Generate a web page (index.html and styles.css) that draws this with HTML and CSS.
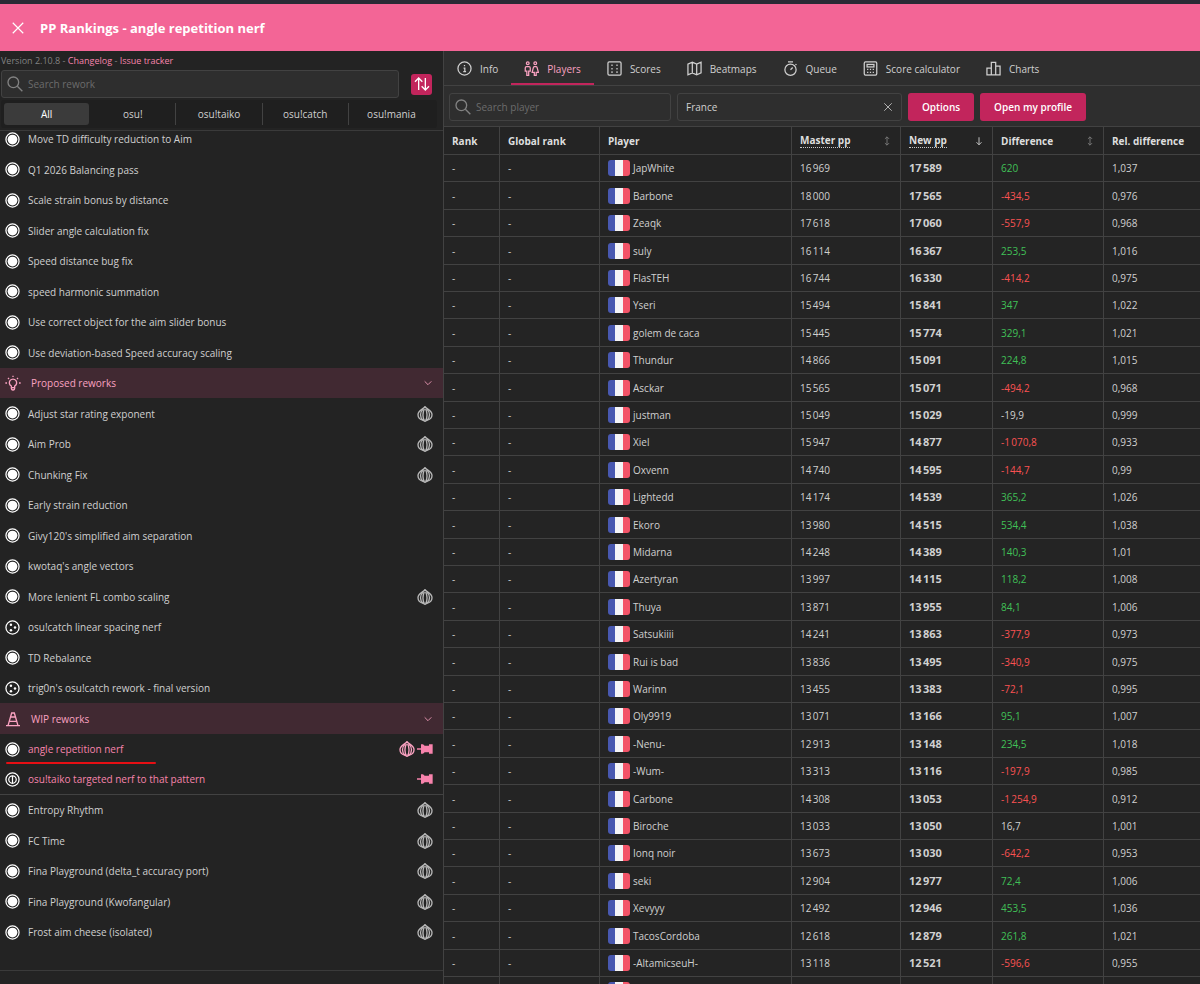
FILE: index.html
```html
<!DOCTYPE html>
<html lang="en">
<head>
<meta charset="utf-8">
<title>PP Rankings - angle repetition nerf</title>
<link rel="stylesheet" href="styles.css">
</head>
<body>
<svg class="sprite" aria-hidden="true">
  <symbol id="i-close" viewBox="0 0 24 24"><path d="M3 3l18 18M21 3L3 21"/></symbol>
  <symbol id="i-search" viewBox="0 0 24 24"><circle cx="9.500" cy="9.500" r="8"/><path d="M15.500 15.500L23 23"/></symbol>
  <symbol id="i-sort" viewBox="0 0 24 24"><path d="M7 21V3M1.500 8.500L7 3l5.500 5.500M17 3v18M11.500 15.500L17 21l5.500-5.500"/></symbol>
  <symbol id="i-info" viewBox="0 0 24 24"><circle cx="12" cy="12" r="10.500"/><path d="M12 6.500v2M10.500 11.500H12.500V17M10 17h4.500"/></symbol>
  <symbol id="i-players" viewBox="0 0 24 24"><circle cx="6" cy="3.500" r="2.200"/><circle cx="18" cy="3.500" r="2.200"/><path d="M4.500 23v-7H2V11a2 2 0 0 1 2-2h4a2 2 0 0 1 2 2v5H7.500v7zM16.500 23v-5h-3.500l2-7.500a2 2 0 0 1 1.500-1.500h3a2 2 0 0 1 1.500 1.500L23 18h-3.500v5z"/></symbol>
  <symbol id="i-scores" viewBox="0 0 24 24"><rect x="1.500" y="1.500" width="21" height="21" rx="2"/><path d="M8 5.500v2.500M8 11v2.500M8 16.500V19M16 5.500v2.500M16 11v2.500M16 16.500V19"/></symbol>
  <symbol id="i-map" viewBox="0 0 24 24"><path d="M1.500 5L8.500 2l7 3 7-3v17l-7 3-7-3-7 3zM8.500 2v17M15.500 5v17"/></symbol>
  <symbol id="i-queue" viewBox="0 0 24 24"><circle cx="12" cy="14" r="9"/><path d="M8 1.500h8M12 14l3.500-3.500M20 5l1.500 1.500"/></symbol>
  <symbol id="i-calc" viewBox="0 0 24 24"><rect x="2" y="1.500" width="20" height="21" rx="2"/><rect x="6.500" y="5.500" width="11" height="4"/><path d="M6.500 13.500h2M11 13.500h2M15.500 13.500h2M6.500 18h2M11 18h2M15.500 18h2"/></symbol>
  <symbol id="i-charts" viewBox="0 0 24 24"><path d="M1.500 11.500h7V22h-7zM8.500 2h7v20h-7zM15.500 8h7v14h-7z"/></symbol>
  <symbol id="i-down" viewBox="0 0 24 24"><path d="M4 8l8 8 8-8"/></symbol>
  <symbol id="i-bulb" viewBox="0 0 24 24"><path d="M12 1v2M4.500 4.500L6 6M19.500 4.500L18 6M0.500 12h2.500M21 12h2.500M9.500 19v-2.500a5.500 5.500 0 1 1 5 0V19M9.500 19a2.500 3.500 0 1 0 5 0z"/></symbol>
  <symbol id="i-cone" viewBox="0 0 24 24"><path d="M1.500 22h21M4.500 22L10 3h4l5.500 19M8.500 9h7M6.500 15.500h11"/></symbol>
  <symbol id="i-pin" viewBox="0 0 24 24"><path d="M0 11h6V5h3l2.500 2H18V5h5.500v14H18v-2h-6.500L9 19H6v-6H0z"/></symbol>
  <symbol id="i-onion" viewBox="0 0 24 24"><path d="M12 1C9.500 5 1.500 6 1.500 13c0 5 4 7.500 8 8.500l2.500 1.500 2.500-1.500c4-1 8-3.500 8-8.500C22.500 6 14.500 5 12 1z"/><path d="M9 5C4 9 4 17 9 21.500M15 5c5 4 5 12 0 16.500M11 4C8.500 10 8.500 17 11 22M13 4c2.500 6 2.500 13 0 18"/></symbol>
  <symbol id="m-osu" viewBox="0 0 24 24"><circle cx="12" cy="12" r="10.500"/><circle class="fill" cx="12" cy="12" r="7.800"/></symbol>
  <symbol id="m-catch" viewBox="0 0 24 24"><circle cx="12" cy="12" r="10.500"/><circle class="fill" cx="9.500" cy="7.500" r="2"/><circle class="fill" cx="9.500" cy="16.500" r="2"/><circle class="fill" cx="16" cy="12" r="2"/></symbol>
  <symbol id="m-taiko" viewBox="0 0 24 24"><circle cx="12" cy="12" r="10.500"/><circle cx="12" cy="12" r="6"/><path d="M12 6v12"/></symbol>
  <symbol id="i-updown" viewBox="0 0 24 24"><path d="M12 2v20M7 7l5-5 5 5M7 17l5 5 5-5"/></symbol>
  <symbol id="i-arrow" viewBox="0 0 24 24"><path d="M12 3v18M6 15l6 6 6-6"/></symbol>
</svg>

<header class="titlebar">
  <button class="plain" aria-label="Close"><svg class="icon icon-md"><use href="#i-close"/></svg></button>
  <h1>PP Rankings - angle repetition nerf</h1>
</header>

<div class="layout">
  <aside class="sidebar">
    <p class="version">Version 2.10.8 - <a href="#changelog">Changelog</a> - <a href="#issues">Issue tracker</a></p>
    <div class="sidebar-search">
      <label class="field"><svg class="icon icon-lg"><use href="#i-search"/></svg><input type="text" placeholder="Search rework" aria-label="Search rework"></label>
      <button class="sort" aria-label="Sort"><svg class="icon icon-lg"><use href="#i-sort"/></svg></button>
    </div>
    <div class="modes">
      <button class="mode active">All</button>
      <button class="mode">osu!</button>
      <button class="mode">osu!taiko</button>
      <button class="mode">osu!catch</button>
      <button class="mode">osu!mania</button>
    </div>
    <div class="rework-scroll"><ul class="reworks" id="reworks"></ul></div>
  </aside>

  <main class="content">
    <nav class="tabs">
      <a class="tab" href="#info"><svg class="icon icon-mark"><use href="#i-info"/></svg>Info</a>
      <a class="tab active" href="#players"><svg class="icon icon-mark"><use href="#i-players"/></svg>Players</a>
      <a class="tab" href="#scores"><svg class="icon icon-mark"><use href="#i-scores"/></svg>Scores</a>
      <a class="tab" href="#beatmaps"><svg class="icon icon-mark"><use href="#i-map"/></svg>Beatmaps</a>
      <a class="tab" href="#queue"><svg class="icon icon-mark"><use href="#i-queue"/></svg>Queue</a>
      <a class="tab" href="#calculator"><svg class="icon icon-mark"><use href="#i-calc"/></svg>Score calculator</a>
      <a class="tab" href="#charts"><svg class="icon icon-mark"><use href="#i-charts"/></svg>Charts</a>
    </nav>
    <div class="toolbar">
      <label class="field"><svg class="icon icon-lg"><use href="#i-search"/></svg><input type="text" placeholder="Search player" aria-label="Search player"></label>
      <div class="field country"><input type="text" value="France" aria-label="Country"><button class="plain" aria-label="Clear country"><svg class="icon icon-sm"><use href="#i-close"/></svg></button></div>
      <button class="primary">Options</button>
      <button class="primary">Open my profile</button>
    </div>
    <div class="table-scroll">
      <table class="players">
        <colgroup><col class="c-rank"><col class="c-global"><col><col class="c-master"><col class="c-new"><col class="c-diff"><col class="c-rel"></colgroup>
        <thead><tr>
          <th>Rank</th><th>Global rank</th><th>Player</th>
          <th><div class="head"><abbr title="Master pp">Master pp</abbr><svg class="icon icon-sm dim"><use href="#i-updown"/></svg></div></th>
          <th><div class="head"><abbr title="New pp">New pp</abbr><svg class="icon icon-sm"><use href="#i-arrow"/></svg></div></th>
          <th><div class="head">Difference<svg class="icon icon-sm dim"><use href="#i-updown"/></svg></div></th>
          <th>Rel. difference</th>
        </tr></thead>
        <tbody id="players"></tbody>
      </table>
    </div>
  </main>
</div>
<script src="app.js"></script>
</body>
</html>
```
FILE: styles.css
```css
* { box-sizing: border-box; }
body {
  margin: 0;
  height: 100vh;
  display: flex;
  flex-direction: column;
  overflow: hidden;
  background: #232323;
  color: #d0d0d0;
  font: 10px/16px "Open Sans", "Noto Sans", sans-serif;
}
button, input { font: inherit; color: inherit; }
button { cursor: pointer; border: 0; padding: 0; }
a { color: inherit; text-decoration: none; }
.sprite { position: absolute; width: 0; height: 0; }
.icon { flex: none; display: block; fill: none; stroke: currentColor; stroke-width: 2; }
.icon .fill, .fill { fill: currentColor; stroke: none; }
.icon-sm { width: 10px; height: 10px; }
.icon-md { width: 14px; height: 14px; }
.icon-mark { width: 15px; height: 15px; }
.icon-lg { width: 16px; height: 16px; }
.plain { background: none; }

.titlebar {
  flex: none;
  display: flex;
  align-items: center;
  gap: 15px;
  height: 51px;
  padding: 0 11px;
  border-top: 4px solid #2a2a35;
  background: #f36596;
  color: #fff;
}
.titlebar h1 { margin: 0; font-size: 13px; line-height: 20px; font-weight: 700; }

.layout { flex: 1; min-height: 0; display: flex; }
.sidebar {
  width: 37%;
  display: flex;
  flex-direction: column;
  border-right: 1px solid #424242;
}
.version { margin: 0; padding: 2px 1px 1px; font-size: 9px; color: #828282; }
.version a { color: #f783ac; }
.sidebar-search { display: flex; align-items: center; gap: 12px; padding: 0 11px 0 1px; }
.field {
  flex: 1;
  min-width: 0;
  height: 28px;
  display: flex;
  align-items: center;
  gap: 5px;
  padding: 0 8px 0 5px;
  border: 1px solid #424242;
  border-radius: 3px;
  background: #2e2e2e;
  color: #828282;
}
.field input { flex: 1; min-width: 0; padding: 0; border: 0; outline: 0; background: none; color: #d0d0d0; }
.field input::placeholder { color: #6c6c6c; opacity: 1; }
.sort {
  width: 21px;
  height: 21px;
  display: grid;
  place-items: center;
  border-radius: 3px;
  background: #c2255c;
  color: #fff;
}
.modes {
  display: flex;
  margin: 2px 6px 2px 1px;
  padding: 3px;
  background: #1f1f1f;
  border-radius: 3px;
}
.mode { flex: 1; height: 22px; background: none; border-left: 1px solid #424242; }
.mode.active { background: #3b3b3b; border: 0; border-radius: 3px; color: #fff; }
.mode.active + .mode { border-color: transparent; }

.rework-scroll {
  flex: 1;
  min-height: 0;
  margin-bottom: 13px;
  overflow: hidden;
  border-top: 1px solid #3a3a3a;
  border-bottom: 1px solid #3a3a3a;
}
.reworks { list-style: none; margin: -7px 0 0; padding: 0; }
.reworks li {
  position: relative;
  height: 30px;
  display: flex;
  align-items: center;
  gap: 2px;
  padding: 0 10px 0 5px;
}
.reworks li:nth-child(even) { height: 31px; }
.reworks .name { flex: 1; padding-left: 6px; }
.reworks .mark { color: #fff; }
.reworks .onion { color: #b8b8b8; stroke-width: 2; }
.reworks .solid { fill: currentColor; stroke: none; }
.reworks .group { background: #412932; color: #faa2c1; }
.reworks .group .name { padding-left: 8px; }
.reworks .pinned { color: #f783ac; }
.reworks .pinned .onion { color: #faa2c1; }
.reworks .last-pinned { border-bottom: 1px solid #424242; }
.reworks .highlight::after {
  content: "";
  position: absolute;
  left: 6px;
  bottom: 0;
  width: 150px;
  height: 2px;
  border-radius: 1px;
  background: #e60f14;
}

.content { flex: 1; min-width: 0; display: flex; flex-direction: column; background: #2e2e2e; }
.tabs { flex: none; display: flex; border-bottom: 1px solid #424242; }
.tab {
  height: 34px;
  display: flex;
  align-items: center;
  gap: 8px;
  padding: 3px 13px 0;
  white-space: nowrap;
  border-bottom: 2px solid transparent;
}
.tab.active { color: #faa2c1; border-color: #c2255c; }
.toolbar { flex: none; display: flex; gap: 6px; padding: 7px 114px 5px 5px; }
.country { padding-left: 8px; }
.country .plain { color: #c9c9c9; }
.primary {
  height: 28px;
  padding: 0 14px;
  border-radius: 3px;
  background: #c2255c;
  color: #fff;
  font-weight: 600;
  white-space: nowrap;
}
.table-scroll { flex: 1; min-height: 0; overflow: hidden; background: #242424; border-top: 1px solid #424242; }
.players { width: 100%; table-layout: fixed; border-collapse: separate; border-spacing: 0; }
.c-rank { width: 56px; }
.c-global { width: 100px; }
.c-master { width: 109px; }
.c-new { width: 92px; }
.c-diff { width: 111px; }
.c-rel { width: 96px; }
.players th, .players td {
  padding: 0 8px;
  text-align: left;
  white-space: nowrap;
  border-right: 1px solid #424242;
  border-bottom: 1px solid #424242;
}
.players th:last-child, .players td:last-child { border-right: 0; }
.players th { height: 28px; color: #dedede; font-weight: 700; }
.players tr { height: 27px; }
.players tbody tr:nth-child(5n+2), .players tbody tr:nth-child(5n+4) { height: 28px; }
.players abbr { text-decoration: none; border-bottom: 1px dotted #c9c9c9; line-height: 14px; }
.head { display: flex; align-items: center; justify-content: space-between; }
.dim { color: #828282; }
.player { display: flex; align-items: center; gap: 3px; }
.flag {
  width: 22px;
  height: 16px;
  border-radius: 3px;
  background: linear-gradient(90deg, #4858b0 33%, #f5f5f7 33% 67%, #f35468 67%);
}
.players .new { font-size: 11px; font-weight: 700; }
.up { color: #40c057; }
.down { color: #fa5252; }
```
FILE: app.js
```js
const icon = (id, cls) => `<svg class="icon ${cls}"><use href="#${id}"/></svg>`;

// kind | name | flags (o: onion, p: pinned, h: highlighted, l: last pinned)
const reworks = `
osu|Move TD difficulty reduction to Aim|
osu|Q1 2026 Balancing pass|
osu|Scale strain bonus by distance|
osu|Slider angle calculation fix|
osu|Speed distance bug fix|
osu|speed harmonic summation|
osu|Use correct object for the aim slider bonus|
osu|Use deviation-based Speed accuracy scaling|
bulb|Proposed reworks|
osu|Adjust star rating exponent|o
osu|Aim Prob|o
osu|Chunking Fix|o
osu|Early strain reduction|
osu|Givy120's simplified aim separation|
osu|kwotaq's angle vectors|
osu|More lenient FL combo scaling|o
catch|osu!catch linear spacing nerf|
osu|TD Rebalance|
catch|trig0n's osu!catch rework - final version|
cone|WIP reworks|
osu|angle repetition nerf|oph
taiko|osu!taiko targeted nerf to that pattern|pl
osu|Entropy Rhythm|o
osu|FC Time|o
osu|Fina Playground (delta_t accuracy port)|o
osu|Fina Playground (Kwofangular)|o
osu|Frost aim cheese (isolated)|o`.trim().split("\n").map(l => l.split("|"));

document.getElementById("reworks").innerHTML = reworks.map(([kind, name, flags]) => {
  if (kind === "bulb" || kind === "cone") {
    return `<li class="group">${icon("i-" + kind, "icon-lg")}<span class="name">${name}</span>${icon("i-down", "icon-sm")}</li>`;
  }
  const has = f => flags.includes(f);
  const cls = [has("p") && "pinned", has("l") && "last-pinned", has("h") && "highlight"].filter(Boolean).join(" ");
  return `<li class="${cls}">${icon("m-" + kind, "icon-mark mark")}<span class="name">${name}</span>` +
    (has("o") ? icon("i-onion", "icon-lg onion") : "") +
    (has("p") ? icon("i-pin", "icon-lg solid") : "") + "</li>";
}).join("");

const players = `
JapWhite|16 969|17 589|620|1,037
Barbone|18 000|17 565|-434,5|0,976
Zeaqk|17 618|17 060|-557,9|0,968
suly|16 114|16 367|253,5|1,016
FlasTEH|16 744|16 330|-414,2|0,975
Yseri|15 494|15 841|347|1,022
golem de caca|15 445|15 774|329,1|1,021
Thundur|14 866|15 091|224,8|1,015
Asckar|15 565|15 071|-494,2|0,968
justman|15 049|15 029|-19,9|0,999
Xiel|15 947|14 877|-1 070,8|0,933
Oxvenn|14 740|14 595|-144,7|0,99
Lightedd|14 174|14 539|365,2|1,026
Ekoro|13 980|14 515|534,4|1,038
Midarna|14 248|14 389|140,3|1,01
Azertyran|13 997|14 115|118,2|1,008
Thuya|13 871|13 955|84,1|1,006
Satsukiiii|14 241|13 863|-377,9|0,973
Rui is bad|13 836|13 495|-340,9|0,975
Warinn|13 455|13 383|-72,1|0,995
Oly9919|13 071|13 166|95,1|1,007
-Nenu-|12 913|13 148|234,5|1,018
-Wum-|13 313|13 116|-197,9|0,985
Carbone|14 308|13 053|-1 254,9|0,912
Biroche|13 033|13 050|16,7|1,001
Ionq noir|13 673|13 030|-642,2|0,953
seki|12 904|12 977|72,4|1,006
Xevyyy|12 492|12 946|453,5|1,036
TacosCordoba|12 618|12 879|261,8|1,021
-AltamicseuH-|13 118|12 521|-596,6|0,955
||||`.trim().split("\n").map(l => l.split("|"));

const thin = s => s.replace(" ", "\u202f");
// Changes smaller than 20 pp stay neutral.
const trend = s => {
  const v = parseFloat(s.replace(" ", "").replace(",", "."));
  return v >= 20 ? "up" : v <= -20 ? "down" : "";
};
document.getElementById("players").innerHTML = players.map(([name, master, now, diff, rel]) => {
  const rank = name ? "-" : "";
  return `<tr><td>${rank}</td><td>${rank}</td><td><div class="player"><span class="flag"></span>${name}</div></td>` +
    `<td>${thin(master)}</td><td class="new">${thin(now)}</td><td class="${trend(diff)}">${thin(diff)}</td><td>${rel}</td></tr>`;
}).join("");
```
